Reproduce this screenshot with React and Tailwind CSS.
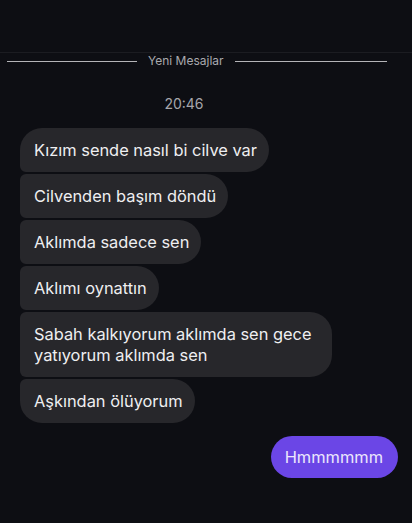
import React from "react";

const messages = [
  "Kızım sende nasıl bi cilve var",
  "Cilvenden başım döndü",
  "Aklımda sadece sen",
  "Aklımı oynattın",
  "Sabah kalkıyorum aklımda sen gece yatıyorum aklımda sen",
  "Aşkından ölüyorum",
];

const cornerFor = (i, total) => {
  if (i === 0) return "rounded-[22px] rounded-bl-[6px]";
  if (i === total - 1) return "rounded-[22px] rounded-tl-[6px]";
  return "rounded-[22px] rounded-l-[6px]";
};

const Bubble = ({ text, corner }) => (
  <div
    className={`max-w-[312px] bg-[#27272b] text-[#efeff1] text-[16.4px] leading-[21px] pl-[14px] pr-[12px] py-[11.5px] ${corner}`}
  >
    {text}
  </div>
);

export default function App() {
  return (
    <div className="w-[412px] h-[523px] bg-[#0d0e13] font-['Inter',sans-serif] overflow-hidden">
      <div className="pt-[52px]">
        <div className="h-px bg-[#1b1c21]" />
      </div>

      {/* new messages divider */}
      <div className="flex items-center h-[16px] pl-[7px] pr-[25px]">
        <div className="w-[130px] h-px bg-[#b4b4b8]" />
        <span className="ml-[11px] mr-[11px] text-[12px] leading-[16px] text-[#a9a9ae]">Yeni Mesajlar</span>
        <div className="flex-1 h-px bg-[#b4b4b8]" />
      </div>

      <div className="mt-[27px] text-center text-[14px] leading-[16px] text-[#a6a6ab] pr-[44px]">20:46</div>

      <div className="mt-[16px] flex flex-col items-start gap-[2px] pl-[20px]">
        {messages.map((m, i) => (
          <Bubble key={i} text={m} corner={cornerFor(i, messages.length)} />
        ))}
      </div>

      <div className="mt-[13px] flex justify-end pr-[14px]">
        <div className="bg-[#6b46e6] text-[#ece6fc] text-[16.4px] leading-[21px] pl-[14px] pr-[15px] py-[10.5px] rounded-[22px]">
          Hmmmmmm
        </div>
      </div>
    </div>
  );
}
